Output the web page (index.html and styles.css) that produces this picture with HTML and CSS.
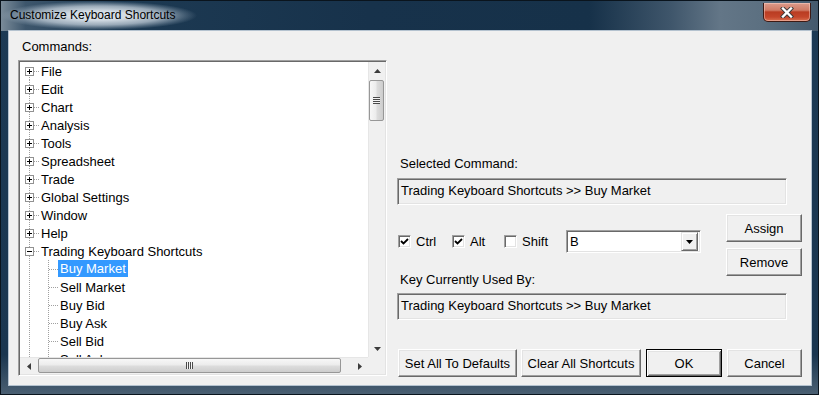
FILE: index.html
```html
<!DOCTYPE html>
<html lang="en">
<head>
  <meta charset="UTF-8">
  <title>Customize Keyboard Shortcuts</title>
  <link rel="stylesheet" href="styles.css">
</head>
<body>
<div class="window">
  <div class="titlebar">
    <span class="title">Customize Keyboard Shortcuts</span>
    <button class="close" aria-label="Close">
      <svg width="14" height="11" viewBox="0 0 14 11">
        <path d="M3 1.5 L11 9.5 M11 1.5 L3 9.5" stroke="#3a3a3a" stroke-width="4.2" stroke-linecap="square"/>
        <path d="M3 1.5 L11 9.5 M11 1.5 L3 9.5" stroke="#fff" stroke-width="2.4" stroke-linecap="square"/>
      </svg>
    </button>
  </div>

  <div class="client">
    <div class="left">
      <div class="caption">Commands:</div>
      <div class="tree">
        <div class="tree-items">
          <div class="row"><span class="node first"><span class="exp plus"></span></span><span class="label">File</span></div>
          <div class="row"><span class="node"><span class="exp plus"></span></span><span class="label">Edit</span></div>
          <div class="row"><span class="node"><span class="exp plus"></span></span><span class="label">Chart</span></div>
          <div class="row"><span class="node"><span class="exp plus"></span></span><span class="label">Analysis</span></div>
          <div class="row"><span class="node"><span class="exp plus"></span></span><span class="label">Tools</span></div>
          <div class="row"><span class="node"><span class="exp plus"></span></span><span class="label">Spreadsheet</span></div>
          <div class="row"><span class="node"><span class="exp plus"></span></span><span class="label">Trade</span></div>
          <div class="row"><span class="node"><span class="exp plus"></span></span><span class="label">Global Settings</span></div>
          <div class="row"><span class="node"><span class="exp plus"></span></span><span class="label">Window</span></div>
          <div class="row"><span class="node"><span class="exp plus"></span></span><span class="label">Help</span></div>
          <div class="row"><span class="node"><span class="exp minus"></span></span><span class="label">Trading Keyboard Shortcuts</span></div>
          <div class="row"><span class="ind"></span><span class="node"></span><span class="label selected">Buy Market</span></div>
          <div class="row"><span class="ind"></span><span class="node"></span><span class="label">Sell Market</span></div>
          <div class="row"><span class="ind"></span><span class="node"></span><span class="label">Buy Bid</span></div>
          <div class="row"><span class="ind"></span><span class="node"></span><span class="label">Buy Ask</span></div>
          <div class="row"><span class="ind"></span><span class="node"></span><span class="label">Sell Bid</span></div>
          <div class="row"><span class="ind"></span><span class="node"></span><span class="label">Sell Ask</span></div>
        </div>

        <div class="vscroll">
          <span class="arrow"><svg width="7" height="4" viewBox="0 0 7 4"><path d="M0 4 L3.5 0 L7 4 Z" fill="#3c3c3c"/></svg></span>
          <span class="thumb v"><span class="grip"></span></span>
          <span class="track"></span>
          <span class="arrow"><svg width="7" height="4" viewBox="0 0 7 4"><path d="M0 0 L7 0 L3.5 4 Z" fill="#3c3c3c"/></svg></span>
        </div>
        <div class="hscroll">
          <span class="arrow"><svg width="4" height="7" viewBox="0 0 4 7"><path d="M4 0 L4 7 L0 3.5 Z" fill="#3c3c3c"/></svg></span>
          <span class="thumb h"><span class="grip"></span></span>
          <span class="track"></span>
          <span class="arrow"><svg width="4" height="7" viewBox="0 0 4 7"><path d="M0 0 L4 3.5 L0 7 Z" fill="#3c3c3c"/></svg></span>
        </div>
        <div class="corner"></div>
      </div>
    </div>

    <div class="right">
      <div class="caption sel-caption">Selected Command:</div>
      <div class="field">Trading Keyboard Shortcuts &gt;&gt; Buy Market</div>

      <div class="keys">
        <div class="mods">
          <label class="check ctrl"><span class="box"><svg width="9" height="9" viewBox="0 0 9 9"><path d="M1 4 L3.5 6.5 L8 2" fill="none" stroke="#000" stroke-width="1.8"/></svg></span>Ctrl</label>
          <label class="check alt"><span class="box"><svg width="9" height="9" viewBox="0 0 9 9"><path d="M1 4 L3.5 6.5 L8 2" fill="none" stroke="#000" stroke-width="1.8"/></svg></span>Alt</label>
          <label class="check shift"><span class="box"></span>Shift</label>
          <div class="combo">
            <span class="combo-text">B</span>
            <span class="combo-btn"><svg width="7" height="4" viewBox="0 0 7 4"><path d="M0 0 L7 0 L3.5 4 Z" fill="#000"/></svg></span>
          </div>
        </div>
        <div class="side-btns">
          <button class="btn">Assign</button>
          <button class="btn">Remove</button>
        </div>
        <div class="caption used-caption">Key Currently Used By:</div>
        <div class="field used">Trading Keyboard Shortcuts &gt;&gt; Buy Market</div>
      </div>

      <div class="bottom-btns">
        <button class="btn defaults">Set All To Defaults</button>
        <button class="btn clear">Clear All Shortcuts</button>
        <button class="btn ok">OK</button>
        <button class="btn cancel">Cancel</button>
      </div>
    </div>
  </div>
</div>
</body>
</html>
```

FILE: styles.css
```css
/* dialog window, classic controls */
html, body { margin: 0; padding: 0; }
body {
  width: 819px; height: 395px; overflow: hidden;
  font-family: "Liberation Sans", Arial, sans-serif;
  font-size: 13px; color: #000;
  background: #1b3853;
}

.window {
  box-sizing: border-box; height: 395px;
  border: 1px solid #0a141d;
  display: flex; flex-direction: column;
  background:
    linear-gradient(to right, #7a8b99 0%, #3d566c 3%, #1d3a53 14%, #17324b 45%, #163149 72%, #3f566b 82%, #637687 88%, #5c7081 93%, #44596c 100%) top / 100% 30px no-repeat,
    linear-gradient(#1c3a55, #1a3650 90%, #4a5f72 100%);
}

/* title bar */
.titlebar { height: 29px; flex: none; display: flex; align-items: flex-start; }
.title {
  line-height: 29px; font-size: 12px;
  padding: 0 22px 0 9px;
  background: radial-gradient(closest-side, rgba(222,230,237,0.95) 30%, rgba(205,216,226,0.7) 65%, rgba(180,196,210,0.25) 88%, rgba(180,196,210,0));
}
.close {
  margin: 2px 7px 0 auto; padding: 0;
  width: 48px; height: 19px; box-sizing: border-box;
  display: flex; align-items: center; justify-content: center;
  border: 1px solid #3d1a14; border-top: none;
  border-radius: 0 0 5px 5px;
  background: linear-gradient(#dc9c8c 0%, #cf7a64 40%, #b93c22 50%, #c4462b 78%, #d9704f 100%);
  box-shadow: inset 0 0 0 1px rgba(255,220,210,0.45);
}

/* client area */
.client {
  flex: 1; display: flex; gap: 10px;
  margin: 0 6px 8px 7px; padding: 8px 9px;
  border: 1px solid #b4c2cf;
  background: #f0f0f0;
}
.caption { line-height: 16px; height: 16px; padding-left: 3px; white-space: nowrap; }
.left { width: 369px; flex: none; }
.left .caption { margin-bottom: 5px; padding-left: 4px; }

/* sunken border used by tree, fields, checkboxes, combo */
.tree, .field, .box, .combo {
  box-sizing: border-box;
  border: 1px solid; border-color: #a0a0a0 #fff #fff #a0a0a0;
  box-shadow: inset 1px 1px #696969, inset -1px -1px #e3e3e3;
}

/* tree view */
.tree {
  width: 369px; height: 316px;
  padding: 1px;
  background: #fff;
  display: grid;
  grid-template-columns: 1fr 17px;
  grid-template-rows: 1fr 17px;
}
.tree-items { overflow: hidden; }
.row { display: flex; height: 18px; align-items: flex-start; white-space: nowrap; }
.node, .ind { position: relative; flex: none; width: 19px; height: 18px; }
.node::before, .ind::before {
  content: ''; position: absolute; left: 9px; top: 0; bottom: 0; width: 1px;
  background: linear-gradient(#a0a0a0 50%, transparent 50%) 0 0 / 1px 2px repeat-y;
}
.node.first::before { top: 9px; }
.node::after {
  content: ''; position: absolute; left: 10px; top: 9px; width: 9px; height: 1px;
  background: linear-gradient(to right, #a0a0a0 50%, transparent 50%) 0 0 / 2px 1px repeat-x;
}
.exp {
  position: absolute; left: 5px; top: 5px; z-index: 1;
  width: 9px; height: 9px; box-sizing: border-box;
  border: 1px solid #919191; background: #fff;
}
.exp::before {
  content: ''; position: absolute; left: 1px; top: 3px; width: 5px; height: 1px; background: #000;
}
.exp.plus::after {
  content: ''; position: absolute; left: 3px; top: 1px; width: 1px; height: 5px; background: #000;
}
.label { box-sizing: border-box; height: 18px; line-height: 17px; padding: 1px 2px 0; }
.label.selected { background: #3399ff; color: #fff; height: 17px; padding-top: 0; line-height: 18px; }

/* scrollbars */
.vscroll, .hscroll { display: flex; background: #f0f0f0; }
.vscroll { flex-direction: column; border-left: 1px solid #e6e6e6; }
.hscroll { border-top: 1px solid #e6e6e6; }
.arrow { width: 17px; height: 17px; flex: none; display: flex; align-items: center; justify-content: center; }
.vscroll .arrow { width: 16px; }
.hscroll .arrow { height: 16px; }
.track { flex: 1; }
.thumb {
  box-sizing: border-box; flex: none;
  border: 1px solid #979797; border-radius: 2px;
  display: flex; align-items: center; justify-content: center;
}
.thumb.v {
  width: 15px; height: 41px; margin: 1px 0 0 0;
  background: linear-gradient(to right, #f7f7f7 0%, #ececec 45%, #dcdcdc 55%, #cdcdcd 100%);
}
.thumb.h {
  width: 303px; height: 15px; margin: 0 0 0 1px;
  background: linear-gradient(#f7f7f7 0%, #ececec 45%, #dcdcdc 55%, #cdcdcd 100%);
}
.thumb.v .grip {
  width: 7px; height: 7px;
  background: repeating-linear-gradient(#4a4a4a 0 1px, #f4f4f4 1px 2px);
}
.thumb.h .grip {
  width: 7px; height: 7px;
  background: repeating-linear-gradient(to right, #4a4a4a 0 1px, #f4f4f4 1px 2px);
}
.corner { background: #f0f0f0; }

/* right column */
.right { width: 405px; flex: none; display: flex; flex-direction: column; }
.sel-caption { margin-top: 117px; }
.field {
  width: 390px; height: 27px; margin-top: 6px;
  padding: 3px 3px 0; line-height: 17px;
  background: #f0f0f0; white-space: nowrap;
}

.keys {
  margin-top: 9px;
  display: grid;
  grid-template-columns: 1fr 76px;
  grid-template-rows: 58px 16px auto;
}
.mods {
  grid-row: 1; grid-column: 1;
  display: flex; align-items: center;
  height: 23px; margin-top: 16px;
}
.check { display: flex; align-items: center; gap: 5px; height: 23px; }
.check.ctrl { width: 54px; margin-left: 1px; }
.check.alt { width: 52px; }
.check.shift { width: 62px; }
.box {
  width: 13px; height: 13px; flex: none; background: #fff;
  display: flex; align-items: center; justify-content: center;
}
.combo {
  width: 135px; height: 23px; background: #fff;
  display: flex; align-items: center; padding: 2px;
}
.combo-text { flex: 1; padding-left: 1px; line-height: 17px; }
.combo-btn {
  box-sizing: border-box; width: 17px; height: 19px;
  display: flex; align-items: center; justify-content: center;
  background: #f0f0f0;
  border: 1px solid; border-color: #e3e3e3 #696969 #696969 #e3e3e3;
  box-shadow: inset 1px 1px #fff, inset -1px -1px #a0a0a0;
}
.side-btns {
  grid-row: 1 / 3; grid-column: 2;
  display: flex; flex-direction: column; gap: 6px;
}
.used-caption { grid-row: 2; grid-column: 1; }
.field.used { grid-row: 3; grid-column: 1 / 3; margin-top: 5px; }

/* push buttons */
.btn {
  box-sizing: border-box; height: 28px; width: 76px; padding: 0;
  font-family: inherit; font-size: 13px; color: #000;
  background: #f0f0f0;
  border: 1px solid; border-color: #fff #696969 #696969 #fff;
  box-shadow: inset -1px -1px #a0a0a0, inset 1px 1px #e3e3e3;
  white-space: nowrap;
}
.bottom-btns { display: flex; margin-top: 29px; padding-left: 1px; }
.btn.defaults { width: 119px; }
.btn.clear { width: 120px; margin-left: 4px; }
.btn.ok {
  width: 76px; margin-left: 5px;
  border-color: #000;
  box-shadow: inset 1px 1px #fff, inset -1px -1px #696969, inset 2px 2px #e3e3e3, inset -2px -2px #a0a0a0;
}
.btn.cancel { width: 75px; margin-left: 5px; }
```
